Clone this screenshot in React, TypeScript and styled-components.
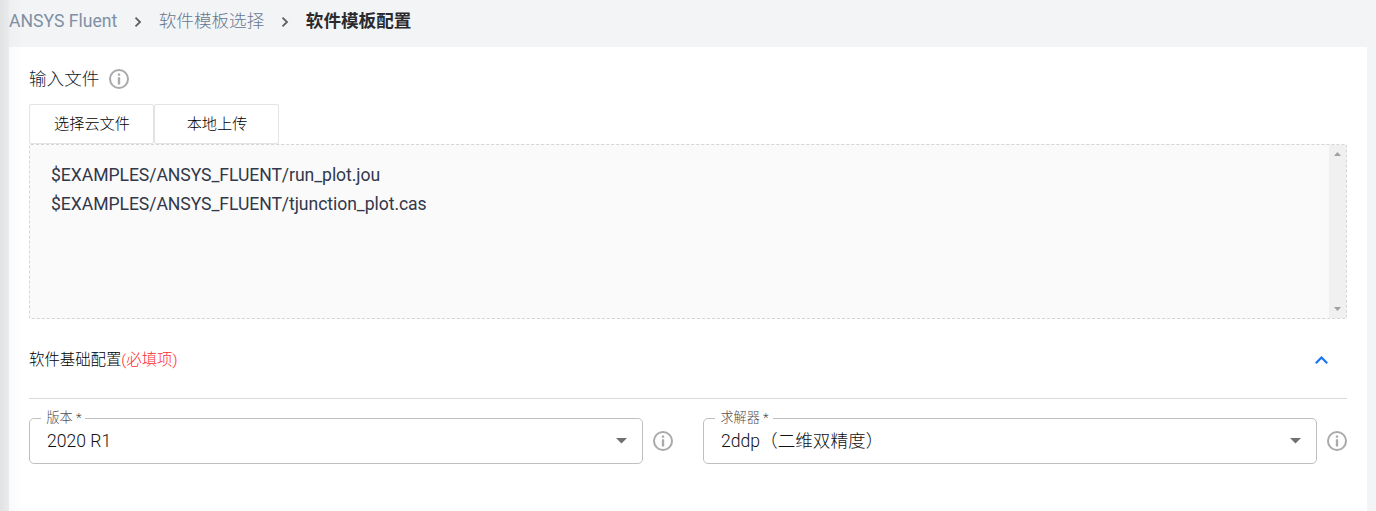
import React from 'react';
import styled, { createGlobalStyle } from 'styled-components';

const GlobalStyle = createGlobalStyle`
  *, *::before, *::after { box-sizing: border-box; }
  body {
    margin: 0;
    background: #f3f4f6;
    font-family: Roboto, "Noto Sans CJK SC", sans-serif;
    font-size: 17.6px;
    color: #252b3a;
  }
`;

const Page = styled.div`
  position: relative;
  display: flex;
  flex-direction: column;
  height: 511px;
  overflow: hidden;
  padding: 0 9px;
`;

const EdgeShadow = styled.div`
  position: absolute;
  inset: 0 auto 0 0;
  width: 24px;
  pointer-events: none;
  background: linear-gradient(to right, rgba(0, 0, 0, 0.075), rgba(0, 0, 0, 0.045) 34%, rgba(0, 0, 0, 0.02) 40%, rgba(0, 0, 0, 0));
`;

const Breadcrumb = styled.nav`
  display: flex;
  align-items: center;
  flex: 0 0 47px;
  height: 47px;
  padding-bottom: 5px;
  line-height: 26px;
`;

const Crumb = styled.span<{ $current?: boolean; $light?: boolean }>`
  white-space: nowrap;
  color: ${(p) => (p.$current ? '#2b2b2e' : p.$light ? '#66788f' : '#8090a4')};
  font-weight: ${(p) => (p.$current ? 700 : p.$light ? 300 : 400)};
`;

const Separator = styled.svg`
  flex: none;
  width: 8px;
  height: 12px;
  margin: 1px 16.5px 0 17px;
`;

const Panel = styled.main`
  flex: 1;
  background: #fff;
  padding: 20px 20px 0;
`;

const FieldTitle = styled.div`
  display: flex;
  align-items: center;
  gap: 9.6px;
  height: 24px;
  line-height: 24px;
  font-weight: 300;
  color: #111a30;
`;

const InfoSvg = styled.svg`
  flex: none;
  width: 20px;
  height: 20px;
`;

const ButtonGroup = styled.div`
  display: flex;
  margin-top: 13px;
`;

const UploadButton = styled.button`
  width: 125px;
  height: 40px;
  padding: 0 0 4px 1px;
  border: 1px solid #e3e3e3;
  border-radius: 2px;
  background: #fff;
  color: #000;
  font: inherit;
  font-size: 15.2px;
  font-weight: 300;
`;

const FileBox = styled.div`
  display: flex;
  justify-content: space-between;
  height: 175px;
  border: 1px dashed #d5d5d5;
  border-radius: 2px;
  background: #fafafa;
`;

const FileList = styled.ul`
  margin: 0;
  padding: 16px 21px;
  list-style: none;
  line-height: 29px;
  letter-spacing: -0.065px;
  color: #31384a;
`;

const ScrollTrack = styled.div`
  display: flex;
  flex-direction: column;
  justify-content: space-between;
  align-items: center;
  width: 17px;
  padding: 7px 0;
  background: #f0f0f0;
`;

const ScrollArrow = styled.svg`
  width: 7px;
  height: 4px;
`;

const SectionHeader = styled.div`
  display: flex;
  align-items: center;
  justify-content: space-between;
  height: 80px;
  padding: 0 19px 0 0;
  border-bottom: 1px solid #d9d9d9;
  font-size: 15.4px;
  font-weight: 300;
  color: #000;
`;

const SectionTitle = styled.span`
  padding-bottom: 2px;
`;

const Chevron = styled.svg`
  width: 13px;
  height: 8px;
  margin-top: 3px;
`;

const Required = styled.span`
  color: #ff2d30;
`;

const Fields = styled.div`
  display: grid;
  grid-template-columns: 644px 644px;
  gap: 30px;
  margin-top: 11px;
`;

const Field = styled.div`
  display: flex;
  align-items: center;
  gap: 10px;
`;

const Outline = styled.fieldset`
  flex: 1;
  min-width: 0;
  height: 54px;
  margin: 0;
  padding: 0 15.5px 0 17px;
  border: 1px solid #bfbfbf;
  border-radius: 5px;
`;

const FieldLabel = styled.legend<{ $width: number }>`
  width: ${(p) => p.$width}px;
  height: 16px;
  margin-left: -6px;
  padding: 0 0 0 5.5px;
  font-size: 13.1px;
  font-weight: 300;
  line-height: 16px;
  white-space: nowrap;
  color: #505050;
`;

const SelectValue = styled.div`
  display: flex;
  align-items: center;
  justify-content: space-between;
  height: 29px;
  line-height: 28px;
  font-weight: 300;
  color: #111;
`;

const Arrow = styled.svg`
  width: 11px;
  height: 6px;
`;

const FieldInfo = styled.div`
  display: flex;
  padding-top: 8px;
`;

const InfoIcon = () => (
  <InfoSvg viewBox="0 0 20 20" fill="none">
    <circle cx="10" cy="10" r="9" stroke="#aaa" strokeWidth="2" />
    <rect x="8.8" y="4.4" width="2.4" height="2.3" rx=".4" fill="#aaa" />
    <rect x="8.8" y="8.2" width="2.4" height="7.4" rx=".4" fill="#aaa" />
  </InfoSvg>
);

const CrumbArrow = () => (
  <Separator viewBox="0 0 8 12" fill="none">
    <path d="M1.5 1.7 6 6 1.5 10.3" stroke="#606060" strokeWidth="1.8" />
  </Separator>
);

const SelectField = ({ label, value, notch }: { label: string; value: string; notch: number }) => (
  <Field>
    <Outline>
      <FieldLabel $width={notch}>{label} *</FieldLabel>
      <SelectValue>
        <span>{value}</span>
        <Arrow viewBox="0 0 11 6"><path d="M0 0h11L5.5 5.6z" fill="#707070" /></Arrow>
      </SelectValue>
    </Outline>
    <FieldInfo><InfoIcon /></FieldInfo>
  </Field>
);

export default function App() {
  return (
    <>
      <GlobalStyle />
      <Page>
        <Breadcrumb>
          <Crumb>ANSYS Fluent</Crumb>
          <CrumbArrow />
          <Crumb $light>软件模板选择</Crumb>
          <CrumbArrow />
          <Crumb $current>软件模板配置</Crumb>
        </Breadcrumb>
        <Panel>
          <FieldTitle>
            <span>输入文件</span>
            <InfoIcon />
          </FieldTitle>
          <ButtonGroup>
            <UploadButton>选择云文件</UploadButton>
            <UploadButton>本地上传</UploadButton>
          </ButtonGroup>
          <FileBox>
            <FileList>
              <li>$EXAMPLES/ANSYS_FLUENT/run_plot.jou</li>
              <li>$EXAMPLES/ANSYS_FLUENT/tjunction_plot.cas</li>
            </FileList>
            <ScrollTrack>
              <ScrollArrow viewBox="0 0 7 4"><path d="M0 4h7L3.5 0z" fill="#a0a0a0" /></ScrollArrow>
              <ScrollArrow viewBox="0 0 7 4"><path d="M0 0h7L3.5 4z" fill="#a0a0a0" /></ScrollArrow>
            </ScrollTrack>
          </FileBox>
          <SectionHeader>
            <SectionTitle>软件基础配置<Required>(必填项)</Required></SectionTitle>
            <Chevron viewBox="0 0 13 8" fill="none">
              <path d="M.8 7.2 6.5 1.5l5.7 5.7" stroke="#1a73f5" strokeWidth="2.2" />
            </Chevron>
          </SectionHeader>
          <Fields>
            <SelectField label="版本" value="2020 R1" notch={44} />
            <SelectField label="求解器" value="2ddp（二维双精度）" notch={58} />
          </Fields>
        </Panel>
        <EdgeShadow />
      </Page>
    </>
  );
}
